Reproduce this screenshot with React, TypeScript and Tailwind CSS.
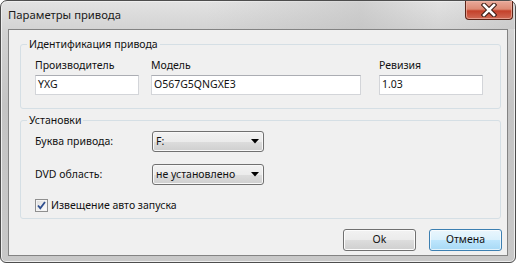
const font = { fontFamily: '"Noto Sans", "Open Sans", sans-serif' };

function TextBox({ value, className }: { value: string; className: string }) {
  return (
    <div
      className={`h-[20px] bg-white border border-[#d3d5d9] border-t-[#abadb3] flex items-center pl-[2px] text-[10.5px] text-[#111] ${className}`}
    >
      {value}
    </div>
  );
}

function Combo({ value }: { value: string }) {
  return (
    <div className="w-[112px] h-[21px] rounded-[3px] border border-[#707070] bg-[linear-gradient(to_bottom,#f2f2f2_0%,#ebebeb_50%,#dddddd_50%,#cfcfcf_100%)] shadow-[inset_0_0_0_1px_#f8f8f8] flex items-center pl-[3px] text-[10.5px] text-[#111]">
      <span className="flex-1">{value}</span>
      <svg width="8" height="5" viewBox="0 0 8 5" className="mr-[4px]">
        <path d="M0 0H8L4 4.5Z" fill="#000" />
      </svg>
    </div>
  );
}

function WinButton({ label, focused }: { label: string; focused?: boolean }) {
  return (
    <div
      className={
        focused
          ? "w-[73px] h-[22px] rounded-[3px] border border-[#3c7fb1] bg-[linear-gradient(to_bottom,#eaf6fd_0%,#d9f0fc_50%,#bee6fd_50%,#a7d9f5_100%)] shadow-[inset_0_0_0_1px_#ffffffaa] flex items-center justify-center text-[10.5px] text-[#111]"
          : "w-[73px] h-[22px] rounded-[3px] border border-[#707070] bg-[linear-gradient(to_bottom,#f2f2f2_0%,#ebebeb_50%,#dddddd_50%,#cfcfcf_100%)] shadow-[inset_0_0_0_1px_#fcfcfc] flex items-center justify-center text-[10.5px] text-[#111]"
      }
    >
      {label}
    </div>
  );
}

export default function App() {
  return (
    <div className="w-[520px] h-[267px] bg-white" style={font}>
      <div className="w-[516px] h-[263px] flex flex-col rounded-t-[7px] rounded-b-[6px] border border-[#4d4d4d] bg-[linear-gradient(to_bottom,#e2e2e2_0%,#d2d2d2_12%,#c4c4c4_40%,#c8c8c8_100%)] shadow-[inset_0_0_0_1px_#eeeeee]">
        {/* Title bar */}
        <div className="h-[28px] flex items-start bg-[linear-gradient(to_right,#dedede00_0%,#dedede00_40%,#b4b4b466_70%,#cfcfcf00_85%,#b9b9b955_100%)] rounded-t-[7px]">
          <div className="pl-[7px] pt-[6px] text-[11.3px] text-[#1a1a1a] leading-[15px] flex-1">
            Параметры привода
          </div>
          <div className="mr-[2px] w-[48px] h-[19px] rounded-b-[4px] border border-t-0 border-[#5b2418] bg-[linear-gradient(to_bottom,#e9a99a_0%,#dd8a74_45%,#c4412a_55%,#d06a55_100%)] shadow-[inset_0_0_0_1px_#f0b7a8aa] flex items-center justify-center">
            <svg width="16" height="14" viewBox="0 0 16 14">
              <path d="M3 2L13 12M13 2L3 12" stroke="#3a1a12" strokeWidth="4.6" strokeLinecap="square" />
              <path d="M3 2L13 12M13 2L3 12" stroke="#ffffff" strokeWidth="2.6" strokeLinecap="square" />
            </svg>
          </div>
        </div>

        {/* Client area */}
        <div className="flex-1 mx-[7px] mb-[6px] border border-[#838383] bg-[#f0f0f0] flex flex-col text-[10.5px] text-[#111]">
          <fieldset className="ml-[11px] mt-[7px] w-[481px] h-[72px] border border-[#d5dfe5] rounded-[3px] px-[14px]">
            <legend className="-ml-[8px] px-[2px] leading-[15px] text-[10.5px]">Идентификация привода</legend>
            <div className="flex mt-[6px]">
              <div className="flex flex-col w-[104px]">
                <span className="leading-[14px] mb-[3px]">Производитель</span>
                <TextBox value="YXG" className="w-[104px]" />
              </div>
              <div className="flex flex-col ml-[12px] w-[210px]">
                <span className="leading-[14px] mb-[3px]">Модель</span>
                <TextBox value="O567G5QNGXE3" className="w-[210px]" />
              </div>
              <div className="flex flex-col ml-[18px] w-[104px]">
                <span className="leading-[14px] mb-[3px]">Ревизия</span>
                <TextBox value="1.03" className="w-[104px]" />
              </div>
            </div>
          </fieldset>

          <fieldset className="ml-[11px] mt-[4px] w-[481px] h-[106px] border border-[#d5dfe5] rounded-[3px] px-[14px]">
            <legend className="-ml-[8px] px-[2px] leading-[15px] text-[10.5px]">Установки</legend>
            <div className="flex items-center mt-[3px]">
              <span className="w-[117px]">Буква привода:</span>
              <Combo value="F:" />
            </div>
            <div className="flex items-center mt-[12px]">
              <span className="w-[117px]">DVD область:</span>
              <Combo value="не установлено" />
            </div>
            <div className="flex items-center mt-[13px]">
              <div className="w-[13px] h-[13px] border border-[#8f8f8f] bg-[linear-gradient(135deg,#dcdcdc,#ffffff)] shadow-[inset_0_0_0_1px_#f4f4f4] flex items-center justify-center">
                <svg width="9" height="9" viewBox="0 0 9 9">
                  <path d="M1 4.5L3.3 7.2L8 1" stroke="#2f4f8f" strokeWidth="1.8" fill="none" />
                </svg>
              </div>
              <span className="ml-[3px]">Извещение авто запуска</span>
            </div>
          </fieldset>

          <div className="flex justify-end mt-[10px] mr-[5px] gap-[13px]">
            <WinButton label="Ok" />
            <WinButton label="Отмена" focused />
          </div>
        </div>
      </div>
    </div>
  );
}
